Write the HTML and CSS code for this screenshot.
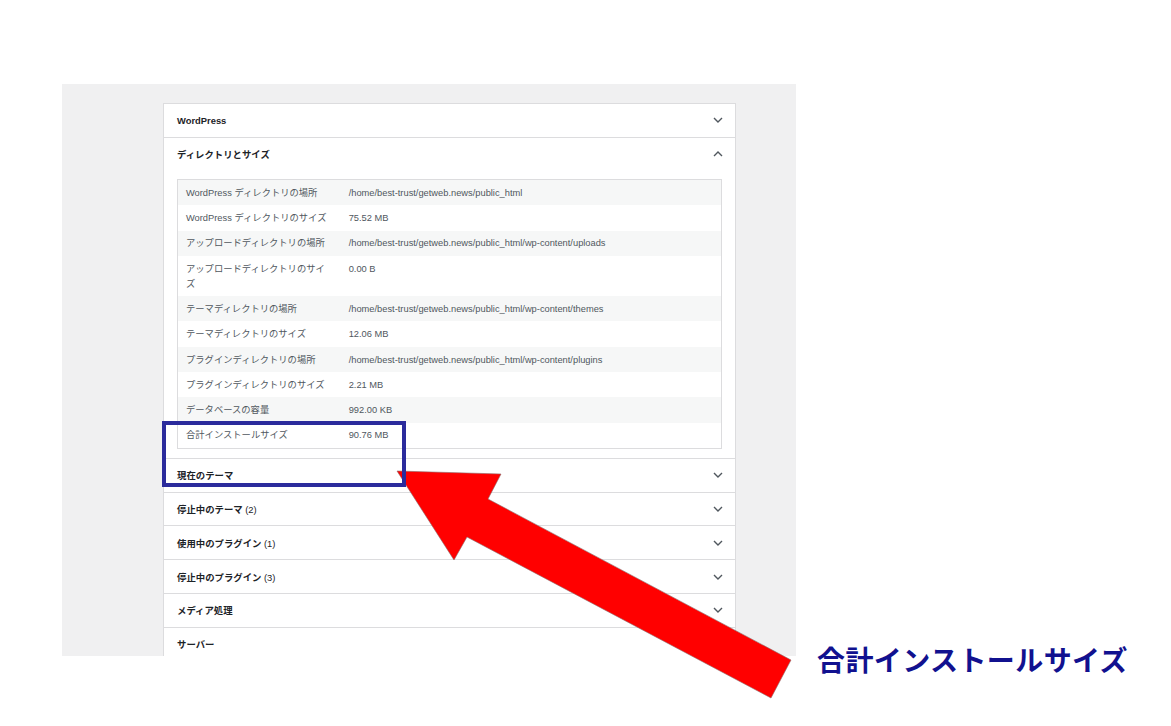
FILE: index.html
```html
<!DOCTYPE html>
<html lang="ja">
<head>
    <meta charset="UTF-8">
    <meta name="viewport" content="width=device-width, initial-scale=1.0">
    <title>サイトヘルス - 情報</title>
    <link rel="stylesheet" href="styles.css">
</head>
<body>
    <div class="screen">
        <div class="health-info">
            <div class="section">
                <div class="section-head">
                    <span>WordPress</span>
                    <svg class="chevron" viewBox="0 0 10 6"><path d="M1 1l4 4 4-4"/></svg>
                </div>
            </div>

            <div class="section open">
                <div class="section-head">
                    <span>ディレクトリとサイズ</span>
                    <svg class="chevron" viewBox="0 0 10 6"><path d="M1 5l4-4 4 4"/></svg>
                </div>
                <div class="section-body">
                    <table class="info-table">
                        <tr><td>WordPress ディレクトリの場所</td><td>/home/best-trust/getweb.news/public_html</td></tr>
                        <tr><td>WordPress ディレクトリのサイズ</td><td>75.52 MB</td></tr>
                        <tr><td>アップロードディレクトリの場所</td><td>/home/best-trust/getweb.news/public_html/wp-content/uploads</td></tr>
                        <tr><td>アップロードディレクトリのサイズ</td><td>0.00 B</td></tr>
                        <tr><td>テーマディレクトリの場所</td><td>/home/best-trust/getweb.news/public_html/wp-content/themes</td></tr>
                        <tr><td>テーマディレクトリのサイズ</td><td>12.06 MB</td></tr>
                        <tr><td>プラグインディレクトリの場所</td><td>/home/best-trust/getweb.news/public_html/wp-content/plugins</td></tr>
                        <tr><td>プラグインディレクトリのサイズ</td><td>2.21 MB</td></tr>
                        <tr><td>データベースの容量</td><td>992.00 KB</td></tr>
                        <tr><td>合計インストールサイズ</td><td>90.76 MB</td></tr>
                    </table>
                </div>
            </div>

            <div class="section">
                <div class="section-head">
                    <span>現在のテーマ</span>
                    <svg class="chevron" viewBox="0 0 10 6"><path d="M1 1l4 4 4-4"/></svg>
                </div>
            </div>
            <div class="section">
                <div class="section-head">
                    <span>停止中のテーマ <span class="count">(2)</span></span>
                    <svg class="chevron" viewBox="0 0 10 6"><path d="M1 1l4 4 4-4"/></svg>
                </div>
            </div>
            <div class="section">
                <div class="section-head">
                    <span>使用中のプラグイン <span class="count">(1)</span></span>
                    <svg class="chevron" viewBox="0 0 10 6"><path d="M1 1l4 4 4-4"/></svg>
                </div>
            </div>
            <div class="section">
                <div class="section-head">
                    <span>停止中のプラグイン <span class="count">(3)</span></span>
                    <svg class="chevron" viewBox="0 0 10 6"><path d="M1 1l4 4 4-4"/></svg>
                </div>
            </div>
            <div class="section">
                <div class="section-head">
                    <span>メディア処理</span>
                    <svg class="chevron" viewBox="0 0 10 6"><path d="M1 1l4 4 4-4"/></svg>
                </div>
            </div>
            <div class="section">
                <div class="section-head">
                    <span>サーバー</span>
                    <svg class="chevron" viewBox="0 0 10 6"><path d="M1 1l4 4 4-4"/></svg>
                </div>
            </div>
        </div>
    </div>

    <!-- annotation layer: arrow, highlight box and caption -->
    <div class="annotation">
        <svg class="arrow" viewBox="0 0 1171 726">
            <polygon points="397,471 501,474 488,499 791,660 771,698 467,537 454,560"/>
        </svg>
        <div class="highlight"></div>
        <p class="caption">合計インストールサイズ</p>
    </div>
</body>
</html>
```

FILE: styles.css
```css
:root {
    --frame: #f0f0f1;
    --line: #dcdcde;
    --text: #1d2327;
    --muted: #50575e;
    --stripe: #f6f7f7;
}

body {
    margin: 0;
    width: 1171px;
    height: 726px;
    overflow: hidden;
    position: relative;
    background: #fff;
    font-family: "Liberation Sans", "Noto Sans CJK JP", sans-serif;
    color: var(--text);
}

.screen {
    margin: 84px 0 0 62px;
    width: 734px;
    height: 572px;
    overflow: hidden;
    background: var(--frame);
    padding: 19px 0 0 101px;
    box-sizing: border-box;
}

.health-info {
    width: 573px;
    background: #fff;
    border: 1px solid var(--line);
    border-bottom: none;
    box-sizing: border-box;
}

.section {
    border-bottom: 1px solid var(--line);
}

.section-head {
    height: 32.8px;
    display: flex;
    align-items: center;
    justify-content: space-between;
    padding: 0 12px 0 13px;
    font-size: 9.4px;
    font-weight: bold;
}

.section-head .count {
    font-weight: normal;
}

.chevron {
    width: 10px;
    height: 6px;
    fill: none;
    stroke: var(--muted);
    stroke-width: 1.4;
}

.section-body {
    padding: 8.4px 13px 9px;
}

.info-table {
    width: 100%;
    border-collapse: collapse;
    border: 1px solid var(--line);
    font-size: 9.3px;
    color: var(--muted);
}

.info-table tr:nth-child(odd) {
    background: var(--stripe);
}

.info-table td {
    padding: 5.9px 8px 4.5px;
    line-height: 14.9px;
    vertical-align: top;
}

.info-table td:first-child {
    width: 30%;
}

.annotation {
    position: absolute;
    inset: 0;
    pointer-events: none;
}

.arrow {
    position: absolute;
    left: 0;
    top: 0;
    width: 1171px;
    height: 726px;
}

.arrow polygon {
    fill: #ff0000;
    stroke: #8a6a6a;
    stroke-width: 0.6;
}

.highlight {
    position: absolute;
    left: 162px;
    top: 421px;
    width: 244px;
    height: 66px;
    border: 4px solid #2b2b9c;
    box-sizing: border-box;
}

.caption {
    position: absolute;
    left: 817px;
    top: 645px;
    margin: 0;
    font-family: "Noto Sans CJK JP", sans-serif;
    font-size: 28px;
    line-height: 28px;
    font-weight: bold;
    letter-spacing: 0.4px;
    color: #11118f;
}
```
